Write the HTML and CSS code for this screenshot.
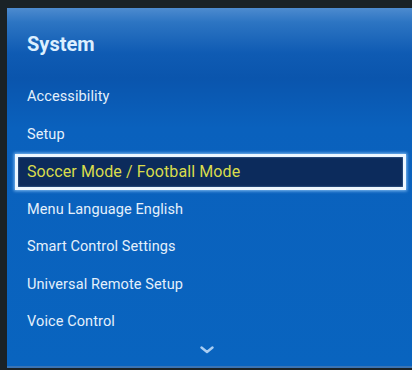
FILE: index.html
```html
<!DOCTYPE html>
<html>
<head>
<meta charset="utf-8">
<link rel="stylesheet" href="styles.css">
</head>
<body>
<div class="panel">
  <h1 class="title">System</h1>
  <ul class="menu">
    <li class="item">Accessibility</li>
    <li class="item">Setup</li>
    <li class="item selected">Soccer Mode / Football Mode</li>
    <li class="item">Menu Language English</li>
    <li class="item">Smart Control Settings</li>
    <li class="item">Universal Remote Setup</li>
    <li class="item">Voice Control</li>
  </ul>
  <div class="more">
    <svg width="14" height="8" viewBox="0 0 14 8"><path d="M1.5 1.5 L7 6 L12.5 1.5" fill="none" stroke="#a9cdf2" stroke-width="2.4" stroke-linecap="round" stroke-linejoin="round"/></svg>
  </div>
</div>
</body>
</html>
```

FILE: styles.css
```css
html, body {
  margin: 0;
  padding: 0;
}
body {
  width: 412px;
  height: 370px;
  background: #1a2226;
  overflow: hidden;
  padding-top: 8px;
  padding-left: 7px;
  box-sizing: border-box;
  font-family: Roboto, "Open Sans", sans-serif;
}
.panel {
  height: 360px;
  background: linear-gradient(180deg, #4d8bcf 0px, #2d75c3 14px, #0f5bb3 45px, #0a55ad 70px, #0a61bd 120px, #0964bf 100%);
  box-sizing: border-box;
  display: flex;
  flex-direction: column;
  border-bottom: 2px solid #3a74b5;
}
.title {
  margin: 0;
  padding: 24px 0 0 20px;
  height: 46px;
  font-size: 20px;
  font-weight: 700;
  color: #dcefff;
  line-height: 24px;
}
.menu {
  list-style: none;
  margin: 0;
  padding: 0 6px 0 8px;
}
.item {
  height: 37.5px;
  box-sizing: border-box;
  display: flex;
  align-items: center;
  padding-left: 12px;
  font-size: 14.5px;
  color: #e4f0fb;
  letter-spacing: 0.1px;
}
.item.selected {
  background: #0c2b5c;
  border: 3px solid #eef7ff;
  box-shadow: 0 0 3px 1px rgba(160, 210, 255, 0.8), inset 0 0 2px rgba(160, 210, 255, 0.6);
  padding-left: 9px;
  color: #d9dc4c;
  font-size: 16px;
  height: 36px;
  margin: 0.75px 0;
}
.more {
  display: flex;
  justify-content: center;
  padding-top: 5px;
  padding-right: 5px;
}
```
